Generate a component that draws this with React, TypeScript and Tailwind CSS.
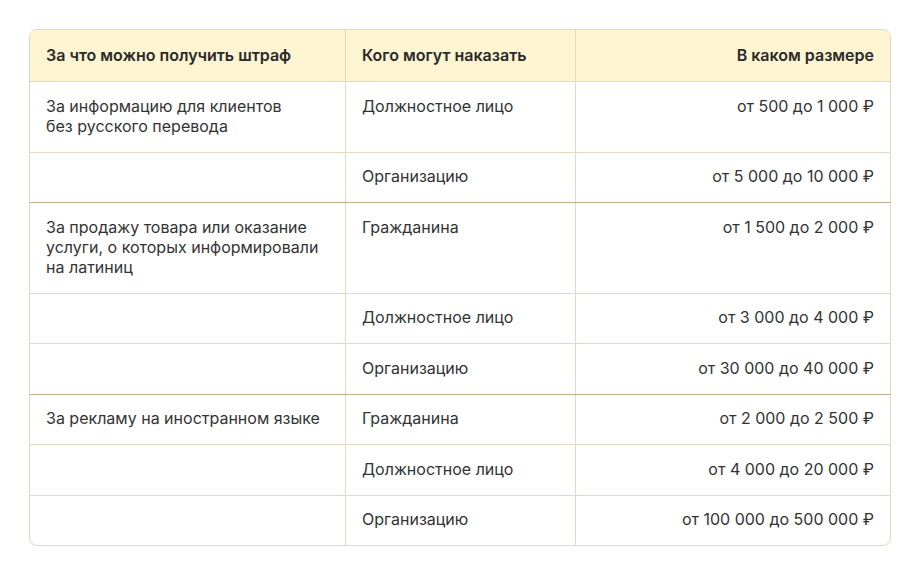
import React from "react";

type Row = { reason?: string; who: string; amount: string; groupStart?: boolean };

const rows: Row[] = [
  { reason: "За информацию для клиентов\nбез русского перевода", who: "Должностное лицо", amount: "от 500 до 1 000 ₽" },
  { who: "Организацию", amount: "от 5 000 до 10 000 ₽" },
  {
    reason: "За продажу товара или оказание\nуслуги, о которых информировали\nна латиниц",
    who: "Гражданина",
    amount: "от 1 500 до 2 000 ₽",
    groupStart: true,
  },
  { who: "Должностное лицо", amount: "от 3 000 до 4 000 ₽" },
  { who: "Организацию", amount: "от 30 000 до 40 000 ₽" },
  { reason: "За рекламу на иностранном языке", who: "Гражданина", amount: "от 2 000 до 2 500 ₽", groupStart: true },
  { who: "Должностное лицо", amount: "от 4 000 до 20 000 ₽" },
  { who: "Организацию", amount: "от 100 000 до 500 000 ₽" },
];

export default function App() {
  return (
    <div
      className="min-h-screen bg-white px-[29px] pt-[29px] text-base leading-5 text-[#333333]"
      style={{ fontFamily: "Inter, 'Noto Sans', sans-serif" }}
    >
      <div className="w-[862px] overflow-hidden rounded-lg border border-[#e2d9c1]">
        {/* Header */}
        <div className="grid grid-cols-[315px_1px_229px_1px_1fr] bg-[#fdf4d2] font-semibold text-[#2a2a2a]">
          <div className="px-4 pt-[14.5px] pb-[16.5px]">За что можно получить штраф</div>
          <div className="bg-[#e2d9c1]" />
          <div className="px-4 pt-[14.5px] pb-[16.5px]">Кого могут наказать</div>
          <div className="bg-[#e2d9c1]" />
          <div className="px-4 pt-[14.5px] pb-[16.5px] text-right">В каком размере</div>
        </div>

        {rows.map((r, i) => (
          <div
            key={i}
            className={`grid grid-cols-[315px_1px_229px_1px_1fr] border-t ${
              r.groupStart ? "border-[#bfae8a]" : "border-[#e2d9c1]"
            }`}
          >
            <div className="whitespace-pre-line px-4 pt-[13.75px] pb-[15.75px]">{r.reason ?? ""}</div>
            <div className="bg-[#e2d9c1]" />
            <div className="px-4 pt-[13.75px] pb-[15.75px]">{r.who}</div>
            <div className="bg-[#e2d9c1]" />
            <div className="px-4 pt-[13.75px] pb-[15.75px] text-right">{r.amount}</div>
          </div>
        ))}
      </div>
    </div>
  );
}
